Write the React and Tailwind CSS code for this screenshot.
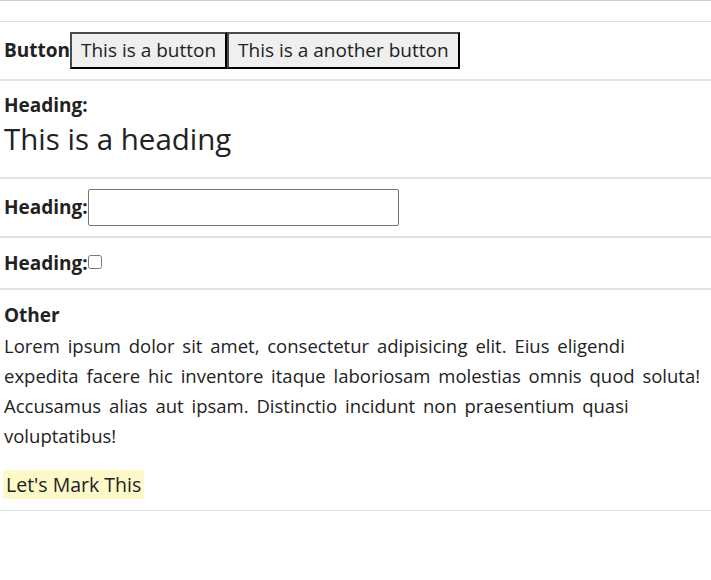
const App = () => {
  return (
    <div
      className="w-[711px] min-h-[580px] bg-white text-[#222] text-[19px]"
      style={{ fontFamily: "'Open Sans', 'Noto Sans', sans-serif" }}
    >
      <div className="h-[21px] border-t border-[#cfcfcf]"></div>

      <div className="border-t border-[#dcdcdc] h-[58px] px-[4px] flex items-center">
        <span className="font-bold">Button</span>
        <button className="h-[37px] px-[9px] bg-[#efefef] border-2 border-t-[#4a4a4a] border-l-[#4a4a4a] border-b-black border-r-black leading-none">
          This is a button
        </button>
        <button className="h-[37px] px-[9px] bg-[#efefef] border-2 border-t-[#4a4a4a] border-l-[#4a4a4a] border-b-black border-r-black leading-none">
          This is a another button
        </button>
      </div>

      <div className="border-t-2 border-[#dfe2e6] h-[98px] px-[4px] pt-[11px]">
        <div className="font-bold leading-[26px]">Heading:</div>
        <h1 className="text-[29.5px] leading-[42px]">This is a heading</h1>
      </div>

      <div className="border-t-2 border-[#dfe2e6] h-[59px] px-[4px] flex items-center">
        <span className="font-bold">Heading:</span>
        <input
          type="text"
          className="w-[311px] h-[37px] border border-[#767676] rounded-[2px] bg-white"
        />
      </div>

      <div className="border-t-2 border-[#dfe2e6] h-[52px] px-[4px] flex items-center">
        <span className="font-bold">Heading:</span>
        <input type="checkbox" className="w-[14px] h-[14px] -mt-[3px]" />
      </div>

      <div className="border-t-2 border-[#dfe2e6] h-[222px] px-[4px] pt-[12px]">
        <div className="font-bold leading-[26px]">Other</div>
        <p className="mt-[3px] text-[18.5px] leading-[30px] [word-spacing:3px]">
          Lorem ipsum dolor sit amet, consectetur adipisicing elit. Eius eligendi
          expedita facere hic inventore itaque laboriosam molestias omnis quod
          soluta! Accusamus alias aut ipsam. Distinctio incidunt non praesentium
          quasi voluptatibus!
        </p>
        <div className="mt-[19px] -ml-[1px]">
          <mark className="bg-[#fcf8c8] text-[#222] px-[3px] py-[1px] text-[19.5px]">Let's Mark This</mark>
        </div>
      </div>

      <div className="border-t border-[#e3e3e8]"></div>
    </div>
  );
};

export default App;
